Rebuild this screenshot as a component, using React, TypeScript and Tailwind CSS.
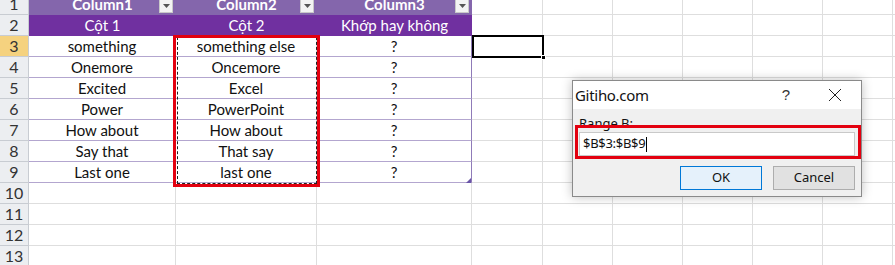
import React from "react";

const COLW = [147, 141, 155, 71, 70, 70, 70, 70, 70, 80];
const WCLS = ["w-[147px]", "w-[141px]", "w-[155px]", "w-[71px]", "w-[70px]", "w-[70px]", "w-[70px]", "w-[70px]", "w-[70px]", "w-[80px]"];

const colA = ["something", "Onemore", "Excited", "Power", "How about", "Say that", "Last one"];
const colB = ["something else", "Oncemore", "Excel", "PowerPoint", "How about", "That say", "last one"];

function DropBtn() {
  return (
    <div className="absolute right-[3px] bottom-[2px] w-[14px] h-[14px] bg-[#f3f3f3] border border-[#c9c9c9] flex items-center justify-center">
      <svg width="7" height="4" viewBox="0 0 7 4">
        <path d="M0 0 L7 0 L3.5 4 Z" fill="#555" />
      </svg>
    </div>
  );
}

function Cell({ r, c }: { r: number; c: number }) {
  const w = WCLS[c];
  const inTable = c < 3;
  if (inTable && r === 1) {
    const t = ["Column1", "Column2", "Column3"][c];
    return (
      <div className={`${w} h-[21px] shrink-0 relative bg-[#8466ac] flex items-center justify-center text-white font-bold text-[15px]`}>
        {t}
        <DropBtn />
      </div>
    );
  }
  if (inTable && r === 2) {
    const t = ["Cột 1", "Cột 2", "Khớp hay không"][c];
    return (
      <div className={`${w} h-[21px] shrink-0 bg-[#7030a0] flex items-center justify-center text-white text-[15px]`}>
        {t}
      </div>
    );
  }
  if (inTable && r >= 3 && r <= 9) {
    const t = c === 0 ? colA[r - 3] : c === 1 ? colB[r - 3] : "?";
    const rb = c === 2 ? "border-r-[#8f7bb8]" : "border-r-[#dadada]";
    return (
      <div className={`${w} h-[21px] shrink-0 bg-white border-r border-b border-b-[#b3a6cf] ${rb} flex items-center justify-center text-[#111] text-[15px]`}>
        {t}
      </div>
    );
  }
  return <div className={`${w} h-[21px] shrink-0 bg-white border-r border-b border-[#dedede]`} />;
}

function Row({ r }: { r: number }) {
  const hdr = r === 3 ? "bg-[#f5d27f]" : "bg-[#eceef1]";
  return (
    <div className="flex h-[21px]">
      <div className={`w-[29px] h-[21px] shrink-0 ${hdr} border-r border-b border-[#c8ccd2] flex items-center justify-center text-[16px] text-[#333]`}>
        {r}
      </div>
      {COLW.map((_, c) => (
        <Cell key={c} r={r} c={c} />
      ))}
    </div>
  );
}

export default function App() {
  const rows = Array.from({ length: 13 }, (_, i) => i + 1);
  return (
    <div className="relative w-[895px] h-[265px] overflow-hidden bg-white font-['Lato',sans-serif]">
      <div className="-mt-[6px]">
        {rows.map((r) => (
          <Row key={r} r={r} />
        ))}
      </div>

      {/* marching ants on B3:B9 */}
      <div className="absolute left-[177px] top-[37px] w-[140px] h-[147px] border border-dashed border-[#222]" />
      {/* red annotation box */}
      <div className="absolute left-[173px] top-[35px] w-[147px] h-[152px] border-[3px] border-[#e3000f]" />

      {/* selected cell D3 */}
      <div className="absolute left-[472px] top-[35px] w-[72px] h-[23px] border-2 border-black" />
      <div className="absolute left-[541px] top-[55px] w-[5px] h-[5px] bg-black border border-white" />

      {/* table resize handle */}
      <svg className="absolute left-[466px] top-[178px]" width="5" height="5" viewBox="0 0 5 5">
        <path d="M5 0 L5 5 L0 5 Z" fill="#6a55a8" />
      </svg>

      {/* dialog */}
      <div className="absolute left-[572px] top-[80px] w-[290px] h-[117px] border border-[#8a8a8a] bg-[#f0f0f0] shadow-[0_0_10px_rgba(0,0,0,0.25)] flex flex-col font-['Noto_Sans',sans-serif]">
        <div className="h-[28px] bg-white flex items-center pl-[2px] shrink-0">
          <span className="text-[15px] text-[#111] tracking-[-0.3px]">Gitiho.com</span>
          <span className="ml-auto mr-[38px] text-[15px] text-[#333] font-['Liberation_Sans',sans-serif]">?</span>
          <svg className="mr-[19px]" width="14" height="14" viewBox="0 0 14 14">
            <path d="M1 1 L13 13 M13 1 L1 13" stroke="#222" strokeWidth="1" />
          </svg>
        </div>
        <div className="flex-1 flex flex-col px-[6px] pt-[7px]">
          <div className="text-[13px] leading-[15px] text-[#111]">Range B:</div>
          <div className="mt-[1px] h-[24px] bg-white border border-[#c9c9c9] flex items-center pl-[3px] text-[13px] tracking-[-0.3px] text-[#111]">
            $B$3:$B$9<span className="ml-[1px] w-px h-[15px] bg-black" />
          </div>
          <div className="mt-[10px] flex justify-end gap-[11px]">
            <div className="w-[82px] h-[24px] bg-[#e5f1fb] border border-[#0078d7] flex items-center justify-center text-[13px] text-[#111]">
              OK
            </div>
            <div className="w-[82px] h-[24px] bg-[#e1e1e1] border border-[#adadad] flex items-center justify-center text-[13px] text-[#111]">
              Cancel
            </div>
          </div>
        </div>
        <div className="absolute left-[2px] top-[44px] w-[286px] h-[34px] border-[3px] border-[#e3000f]" />
      </div>
    </div>
  );
}
